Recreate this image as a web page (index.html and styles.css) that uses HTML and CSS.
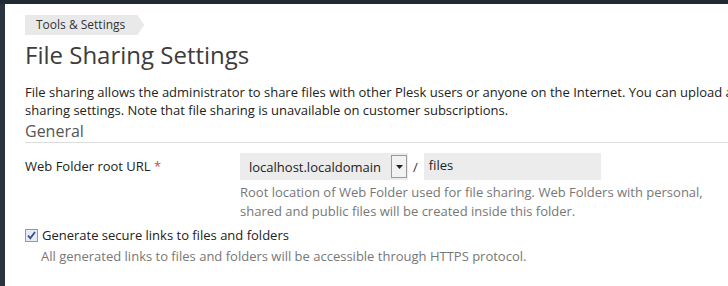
FILE: index.html
```html
<!DOCTYPE html>
<html>
<head>
<meta charset="utf-8">
<link rel="stylesheet" href="styles.css">
</head>
<body>
<div class="frame">
  <div class="side"></div>
  <main class="content">
    <div class="crumbs"><span class="crumb">Tools &amp; Settings</span></div>
    <h1 class="title">File Sharing Settings</h1>
    <p class="intro">File sharing allows the administrator to share files with other Plesk users or anyone on the Internet. You can upload and share files, and configure<br>sharing settings. Note that file sharing is unavailable on customer subscriptions.</p>
    <h2 class="section">General</h2>
    <div class="row">
      <label class="label">Web Folder root URL <span class="req">*</span></label>
      <div class="field">
        <div class="controls">
          <div class="select"><span class="select-text">localhost.localdomain</span><span class="arrow"><svg width="7" height="4" viewBox="0 0 7 4"><path d="M0 0h7L3.5 4z" fill="#222"/></svg></span></div>
          <span class="slash">/</span>
          <div class="input">files</div>
        </div>
        <div class="hint">Root location of Web Folder used for file sharing. Web Folders with personal,<br>shared and public files will be created inside this folder.</div>
      </div>
    </div>
    <div class="check-row">
      <span class="checkbox"><svg width="9" height="9" viewBox="0 0 9 9"><path d="M1 4.5l2.3 2.7L8 1" fill="none" stroke="#3b4f8a" stroke-width="1.8"/></svg></span>
      <span class="check-label">Generate secure links to files and folders</span>
    </div>
    <div class="check-hint">All generated links to files and folders will be accessible through HTTPS protocol.</div>
  </main>
</div>
</body>
</html>
```
FILE: styles.css
```css
html, body {
  margin: 0;
  padding: 0;
  background: #fff;
  overflow: hidden;
}
body {
  font-family: "Open Sans", "Liberation Sans", sans-serif;
  color: #222;
  width: 728px;
  height: 286px;
}
.frame {
  display: flex;
  height: 282px;
  border-top: 4px solid #212a32;
}
.side {
  width: 5px;
  flex: none;
  background: #2b343c;
}
.content {
  flex: 1;
  padding-left: 20px;
  min-width: 0;
  overflow: hidden;
}
.crumbs {
  margin-top: 11px;
  height: 20px;
  display: flex;
}
.crumb {
  display: block;
  background: #e9e9e9;
  font-size: 12px;
  line-height: 20px;
  color: #333;
  padding: 0 19px 0 11px;
  clip-path: polygon(0 0, calc(100% - 7px) 0, 100% 50%, calc(100% - 7px) 100%, 0 100%);
}
.title {
  margin: 5px 0 0;
  font-size: 24px;
  font-weight: 400;
  line-height: 30px;
  color: #3c3c3c;
}
.intro {
  margin: 13px 0 0;
  font-size: 13px;
  line-height: 18px;
  white-space: nowrap;
  color: #222;
}
.section {
  margin: 1px 0 0;
  font-size: 16px;
  font-weight: 400;
  line-height: 22px;
  color: #555;
  border-bottom: 1px solid #dcdcdc;
  padding-bottom: 0;
}
.row {
  display: flex;
  margin-top: 10px;
}
.label {
  width: 215px;
  flex: none;
  font-size: 13px;
  line-height: 18px;
  padding-top: 4px;
  color: #222;
}
.req {
  color: #d0453a;
}
.controls {
  display: flex;
  align-items: center;
  height: 27px;
}
.select {
  display: flex;
  align-items: center;
  width: 168px;
  height: 27px;
  background: #ececec;
  box-sizing: border-box;
}
.select-text {
  flex: 1;
  font-size: 13px;
  padding-left: 9px;
  color: #222;
}
.arrow {
  width: 14px;
  height: 21px;
  margin-right: 1px;
  border: 1px solid #9a9a9a;
  background: #f2f2f2;
  display: flex;
  align-items: center;
  justify-content: center;
}
.slash {
  font-size: 13px;
  margin: 0 6px 0 5px;
  color: #333;
}
.input {
  width: 177px;
  height: 27px;
  background: #ececec;
  box-sizing: border-box;
  font-size: 13px;
  line-height: 24px;
  padding-left: 5px;
  color: #222;
}
.hint {
  margin-top: 3px;
  font-size: 13px;
  line-height: 19px;
  color: #777;
}
.check-row {
  display: flex;
  align-items: center;
  margin-top: 5px;
  height: 18px;
}
.checkbox {
  width: 11px;
  height: 11px;
  border: 1px solid #8f9ab0;
  background: #e6ebf5;
  display: flex;
  align-items: center;
  justify-content: center;
  margin-right: 4px;
}
.check-label {
  font-size: 13px;
  color: #222;
}
.check-hint {
  margin-top: 3px;
  padding-left: 16px;
  font-size: 13px;
  line-height: 18px;
  color: #777;
}
```
